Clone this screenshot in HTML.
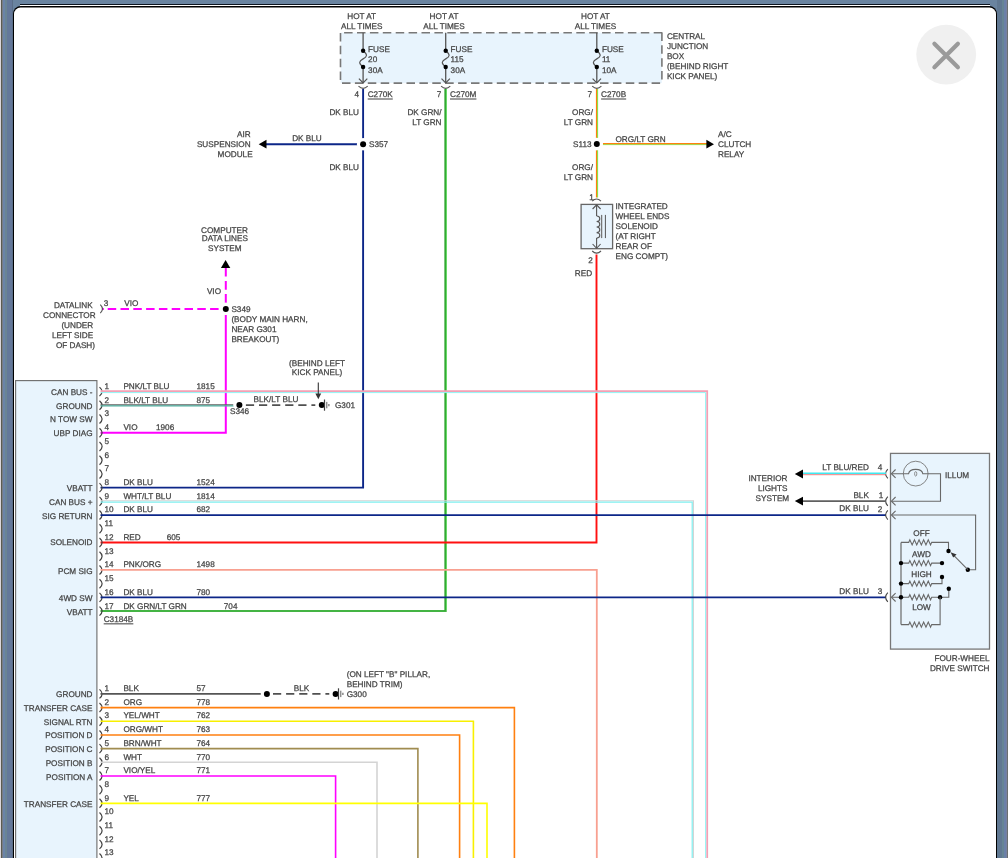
<!DOCTYPE html>
<html><head><meta charset="utf-8"><style>
html,body{margin:0;padding:0;width:1008px;height:858px;overflow:hidden;background:#fff;}
svg{will-change:transform;text-rendering:geometricPrecision;}
</style></head><body>
<svg width="1008" height="858" viewBox="0 0 1008 858" style="position:absolute;left:0;top:0">
<g font-family='"Liberation Sans", sans-serif' font-size="8.2" fill="#454545">
<rect x="0" y="0" width="1008" height="858" fill="#6a84a0"/>
<rect x="0" y="0" width="1" height="858" fill="#dad6dc"/>
<rect x="1" y="0" width="1" height="858" fill="#5c5c50"/>
<rect x="2" y="0" width="1" height="858" fill="#787c88"/>
<rect x="3" y="0" width="2" height="858" fill="#6a84a8"/>
<rect x="5" y="0" width="2" height="858" fill="#6a8494"/>
<rect x="7" y="0" width="5" height="858" fill="#64789a"/>
<rect x="12" y="0" width="1" height="858" fill="#5a6e88"/>
<rect x="1007" y="0" width="1" height="858" fill="#6a7070"/>
<rect x="1006" y="0" width="1" height="858" fill="#7880a0"/>
<rect x="1004" y="0" width="2" height="858" fill="#6a80a8"/>
<rect x="1002" y="0" width="2" height="858" fill="#668494"/>
<rect x="997" y="0" width="5" height="858" fill="#607892"/>
<rect x="20" y="4" width="970" height="1" fill="#0d1520"/>
<rect x="20" y="5" width="970" height="1" fill="#ffffff"/>
<rect x="13" y="6" width="984" height="900" rx="8" fill="#000"/>
<rect x="14" y="7.6" width="982" height="900" rx="6.5" fill="#fff"/>
<circle cx="946.2" cy="54.6" r="29.9" fill="#f0f0f0"/>
<path d="M934.4 43.8 L957.9 67.2 M957.9 43.8 L934.4 67.2" stroke="#9a9a9a" stroke-width="4.2" stroke-linecap="round"/>
<rect x="340.6" y="32.7" width="321.2" height="50.4" fill="#e8f4fd"/>
<line x1="340.50" y1="32.90" x2="340.50" y2="83.50" stroke="#787878" stroke-width="1.6" stroke-dasharray="8.5,4.4"/>
<line x1="661.90" y1="32.40" x2="661.90" y2="83.50" stroke="#787878" stroke-width="1.6" stroke-dasharray="8.5,4.4"/>
<line x1="344.10" y1="32.70" x2="662.70" y2="32.70" stroke="#787878" stroke-width="1.6" stroke-dasharray="8.5,4.4"/>
<line x1="342.00" y1="83.10" x2="662.70" y2="83.10" stroke="#787878" stroke-width="1.6" stroke-dasharray="8.5,4.4"/>
<text x="666.90" y="39.00" text-anchor="start" stroke="#454545" stroke-width="0.25" >CENTRAL</text>
<text x="666.90" y="49.00" text-anchor="start" stroke="#454545" stroke-width="0.25" >JUNCTION</text>
<text x="666.90" y="59.00" text-anchor="start" stroke="#454545" stroke-width="0.25" >BOX</text>
<text x="666.90" y="69.00" text-anchor="start" stroke="#454545" stroke-width="0.25" >(BEHIND RIGHT</text>
<text x="666.90" y="79.00" text-anchor="start" stroke="#454545" stroke-width="0.25" >KICK PANEL)</text>
<text x="361.70" y="19.00" text-anchor="middle" stroke="#454545" stroke-width="0.25" >HOT AT</text>
<text x="361.70" y="29.00" text-anchor="middle" stroke="#454545" stroke-width="0.25" >ALL TIMES</text>
<line x1="363.10" y1="32.70" x2="363.10" y2="83.00" stroke="#555" stroke-width="1.3" />
<rect x="361.90" y="50.70" width="2.4" height="16.30" fill="#e8f4fd"/>
<path d="M363.10 50.70 C368.10 54.70 367.10 56.70 363.10 58.85 S358.10 63.00 363.10 67.00" fill="none" stroke="#555" stroke-width="1.2"/>
<circle cx="363.10" cy="50.70" r="2.2" fill="#000"/>
<circle cx="363.10" cy="67.00" r="2.2" fill="#000"/>
<polyline points="358.90,78.60 363.10,83.00 367.30,78.60" fill="none" stroke="#555" stroke-width="1.2" stroke-linejoin="miter" />
<text x="368.10" y="52.00" text-anchor="start" stroke="#454545" stroke-width="0.25" >FUSE</text>
<text x="368.10" y="62.00" text-anchor="start" stroke="#454545" stroke-width="0.25" >20</text>
<text x="368.10" y="73.00" text-anchor="start" stroke="#454545" stroke-width="0.25" >30A</text>
<path d="M358.50 86.2 Q363.10 90.5 367.70 86.2" fill="none" stroke="#555" stroke-width="1.1"/>
<text x="356.80" y="97.00" text-anchor="middle" stroke="#454545" stroke-width="0.25" >4</text>
<text x="367.70" y="97.00" text-anchor="start" stroke="#454545" stroke-width="0.25" >C270K</text>
<line x1="367.70" y1="99.00" x2="392.77" y2="99.00" stroke="#6a6a6a" stroke-width="1.3"/>
<text x="444.00" y="19.00" text-anchor="middle" stroke="#454545" stroke-width="0.25" >HOT AT</text>
<text x="444.00" y="29.00" text-anchor="middle" stroke="#454545" stroke-width="0.25" >ALL TIMES</text>
<line x1="445.70" y1="32.70" x2="445.70" y2="83.00" stroke="#555" stroke-width="1.3" />
<rect x="444.50" y="50.70" width="2.4" height="16.30" fill="#e8f4fd"/>
<path d="M445.70 50.70 C450.70 54.70 449.70 56.70 445.70 58.85 S440.70 63.00 445.70 67.00" fill="none" stroke="#555" stroke-width="1.2"/>
<circle cx="445.70" cy="50.70" r="2.2" fill="#000"/>
<circle cx="445.70" cy="67.00" r="2.2" fill="#000"/>
<polyline points="441.50,78.60 445.70,83.00 449.90,78.60" fill="none" stroke="#555" stroke-width="1.2" stroke-linejoin="miter" />
<text x="450.60" y="52.00" text-anchor="start" stroke="#454545" stroke-width="0.25" >FUSE</text>
<text x="450.60" y="62.00" text-anchor="start" stroke="#454545" stroke-width="0.25" >115</text>
<text x="450.60" y="73.00" text-anchor="start" stroke="#454545" stroke-width="0.25" >30A</text>
<path d="M441.10 86.2 Q445.70 90.5 450.30 86.2" fill="none" stroke="#555" stroke-width="1.1"/>
<text x="439.00" y="97.00" text-anchor="middle" stroke="#454545" stroke-width="0.25" >7</text>
<text x="450.00" y="97.00" text-anchor="start" stroke="#454545" stroke-width="0.25" >C270M</text>
<line x1="450.00" y1="99.00" x2="476.43" y2="99.00" stroke="#6a6a6a" stroke-width="1.3"/>
<text x="595.40" y="19.00" text-anchor="middle" stroke="#454545" stroke-width="0.25" >HOT AT</text>
<text x="595.40" y="29.00" text-anchor="middle" stroke="#454545" stroke-width="0.25" >ALL TIMES</text>
<line x1="596.80" y1="32.70" x2="596.80" y2="83.00" stroke="#555" stroke-width="1.3" />
<rect x="595.60" y="50.70" width="2.4" height="16.30" fill="#e8f4fd"/>
<path d="M596.80 50.70 C601.80 54.70 600.80 56.70 596.80 58.85 S591.80 63.00 596.80 67.00" fill="none" stroke="#555" stroke-width="1.2"/>
<circle cx="596.80" cy="50.70" r="2.2" fill="#000"/>
<circle cx="596.80" cy="67.00" r="2.2" fill="#000"/>
<polyline points="592.60,78.60 596.80,83.00 601.00,78.60" fill="none" stroke="#555" stroke-width="1.2" stroke-linejoin="miter" />
<text x="601.90" y="52.00" text-anchor="start" stroke="#454545" stroke-width="0.25" >FUSE</text>
<text x="601.90" y="62.00" text-anchor="start" stroke="#454545" stroke-width="0.25" >11</text>
<text x="601.90" y="73.00" text-anchor="start" stroke="#454545" stroke-width="0.25" >10A</text>
<path d="M592.20 86.2 Q596.80 90.5 601.40 86.2" fill="none" stroke="#555" stroke-width="1.1"/>
<text x="589.80" y="97.00" text-anchor="middle" stroke="#454545" stroke-width="0.25" >7</text>
<text x="601.10" y="97.00" text-anchor="start" stroke="#454545" stroke-width="0.25" >C270B</text>
<line x1="601.10" y1="99.00" x2="626.17" y2="99.00" stroke="#6a6a6a" stroke-width="1.3"/>
<polyline points="363.10,89.00 363.10,139.60" fill="none" stroke="#0c2688" stroke-width="1.9" stroke-linejoin="miter" />
<polyline points="363.10,148.80 363.10,487.64 100.50,487.64" fill="none" stroke="#0c2688" stroke-width="1.9" stroke-linejoin="miter" />
<line x1="358.40" y1="144.20" x2="265.00" y2="144.20" stroke="#0c2688" stroke-width="1.9" />
<path d="M258.7 144.2 L266.5 139.8 L266.5 148.6 Z" fill="#000"/>
<circle cx="363.10" cy="144.20" r="6.2" fill="#fff"/>
<circle cx="363.10" cy="144.20" r="3.0" fill="#000"/>
<text x="369.00" y="147.00" text-anchor="start" stroke="#454545" stroke-width="0.25" >S357</text>
<text x="359.00" y="115.00" text-anchor="end" stroke="#454545" stroke-width="0.25" >DK BLU</text>
<text x="359.00" y="170.00" text-anchor="end" stroke="#454545" stroke-width="0.25" >DK BLU</text>
<text x="307.00" y="141.00" text-anchor="middle" stroke="#454545" stroke-width="0.25" >DK BLU</text>
<text x="250.60" y="137.00" text-anchor="end" stroke="#454545" stroke-width="0.25" >AIR</text>
<text x="250.60" y="147.00" text-anchor="end" stroke="#454545" stroke-width="0.25" >SUSPENSION</text>
<text x="252.60" y="157.00" text-anchor="end" stroke="#454545" stroke-width="0.25" >MODULE</text>
<polyline points="445.70,89.00 445.70,611.12 100.50,611.12" fill="none" stroke="#44b444" stroke-width="2.0" stroke-linejoin="miter" />
<polyline points="445.00,89.00 445.00,610.52" fill="none" stroke="#109010" stroke-width="0.8" stroke-linejoin="miter" />
<polyline points="446.40,89.00 446.40,610.52" fill="none" stroke="#60e060" stroke-width="0.8" stroke-linejoin="miter" />
<text x="441.50" y="115.00" text-anchor="end" stroke="#454545" stroke-width="0.25" >DK GRN/</text>
<text x="441.50" y="125.00" text-anchor="end" stroke="#454545" stroke-width="0.25" >LT GRN</text>
<line x1="596.50" y1="89.00" x2="596.50" y2="138.00" stroke="#ff8010" stroke-width="1.2" />
<line x1="597.60" y1="89.00" x2="597.60" y2="138.00" stroke="#7ce040" stroke-width="1.0" />
<line x1="596.50" y1="150.20" x2="596.50" y2="197.50" stroke="#ff8010" stroke-width="1.2" />
<line x1="597.60" y1="150.20" x2="597.60" y2="197.50" stroke="#7ce040" stroke-width="1.0" />
<line x1="602.40" y1="143.50" x2="707.00" y2="143.50" stroke="#ff8010" stroke-width="1.2" />
<line x1="602.40" y1="144.60" x2="707.00" y2="144.60" stroke="#a0d040" stroke-width="1.0" />
<path d="M714 144.2 L706.4 139.8 L706.4 148.6 Z" fill="#000"/>
<circle cx="596.80" cy="144.00" r="6.2" fill="#fff"/>
<circle cx="596.80" cy="144.00" r="3.0" fill="#000"/>
<text x="591.60" y="147.00" text-anchor="end" stroke="#454545" stroke-width="0.25" >S113</text>
<text x="593.00" y="115.00" text-anchor="end" stroke="#454545" stroke-width="0.25" >ORG/</text>
<text x="593.00" y="125.00" text-anchor="end" stroke="#454545" stroke-width="0.25" >LT GRN</text>
<text x="593.00" y="170.00" text-anchor="end" stroke="#454545" stroke-width="0.25" >ORG/</text>
<text x="593.00" y="180.00" text-anchor="end" stroke="#454545" stroke-width="0.25" >LT GRN</text>
<text x="640.60" y="142.00" text-anchor="middle" stroke="#454545" stroke-width="0.25" >ORG/LT GRN</text>
<text x="718.00" y="137.00" text-anchor="start" stroke="#454545" stroke-width="0.25" >A/C</text>
<text x="718.00" y="147.00" text-anchor="start" stroke="#454545" stroke-width="0.25" >CLUTCH</text>
<text x="718.00" y="157.00" text-anchor="start" stroke="#454545" stroke-width="0.25" >RELAY</text>
<rect x="581.1" y="204.4" width="31.5" height="44.3" fill="#e8f4fd" stroke="#666" stroke-width="1.3"/>
<line x1="596.60" y1="205.00" x2="596.60" y2="216.00" stroke="#555" stroke-width="1.1" />
<line x1="596.60" y1="238.10" x2="596.60" y2="248.00" stroke="#555" stroke-width="1.1" />
<polyline points="592.60,209.00 596.60,204.80 600.60,209.00" fill="none" stroke="#555" stroke-width="1.1" stroke-linejoin="miter" />
<polyline points="592.60,244.00 596.60,248.30 600.60,244.00" fill="none" stroke="#555" stroke-width="1.1" stroke-linejoin="miter" />
<path d="M596.6 216.00 C600.80 216.00 600.80 221.53 596.60 221.53 C600.80 221.53 600.80 227.05 596.60 227.05 C600.80 227.05 600.80 232.58 596.60 232.58 C600.80 232.57 600.80 238.10 596.60 238.10" fill="none" stroke="#555" stroke-width="1.1"/>
<line x1="601.60" y1="214.90" x2="601.60" y2="238.10" stroke="#777" stroke-width="1.3" />
<line x1="605.40" y1="214.90" x2="605.40" y2="238.10" stroke="#555" stroke-width="1.0" />
<path d="M592.20 201.2 Q596.60 196.8 601.00 201.2" fill="none" stroke="#555" stroke-width="1.1"/>
<path d="M592.20 251.0 Q596.60 255.4 601.00 251.0" fill="none" stroke="#555" stroke-width="1.1"/>
<text x="591.60" y="200.00" text-anchor="middle" stroke="#454545" stroke-width="0.25" >1</text>
<text x="590.50" y="263.00" text-anchor="middle" stroke="#454545" stroke-width="0.25" >2</text>
<text x="592.10" y="276.00" text-anchor="end" stroke="#454545" stroke-width="0.25" >RED</text>
<text x="615.60" y="209.00" text-anchor="start" stroke="#454545" stroke-width="0.25" >INTEGRATED</text>
<text x="615.60" y="219.00" text-anchor="start" stroke="#454545" stroke-width="0.25" >WHEEL ENDS</text>
<text x="615.60" y="229.00" text-anchor="start" stroke="#454545" stroke-width="0.25" >SOLENOID</text>
<text x="615.60" y="239.00" text-anchor="start" stroke="#454545" stroke-width="0.25" >(AT RIGHT</text>
<text x="615.60" y="249.00" text-anchor="start" stroke="#454545" stroke-width="0.25" >REAR OF</text>
<text x="615.60" y="259.00" text-anchor="start" stroke="#454545" stroke-width="0.25" >ENG COMPT)</text>
<polyline points="596.50,254.50 596.50,542.52 100.50,542.52" fill="none" stroke="#ff1010" stroke-width="1.9" stroke-linejoin="miter" />
<text x="224.50" y="233.00" text-anchor="middle" stroke="#454545" stroke-width="0.25" >COMPUTER</text>
<text x="224.80" y="241.00" text-anchor="middle" stroke="#454545" stroke-width="0.25" >DATA LINES</text>
<text x="224.80" y="251.00" text-anchor="middle" stroke="#454545" stroke-width="0.25" >SYSTEM</text>
<path d="M225.6 259.9 L220.9 267.9 L230.3 267.9 Z" fill="#000"/>
<line x1="225.80" y1="267.90" x2="225.80" y2="303.00" stroke="#ff00ff" stroke-width="2.0" stroke-dasharray="8.7,4.4"/>
<line x1="102.10" y1="308.90" x2="103.90" y2="308.90" stroke="#ff00ff" stroke-width="2.0" />
<line x1="107.70" y1="308.90" x2="219.00" y2="308.90" stroke="#ff00ff" stroke-width="2.0" stroke-dasharray="8.5,4.3"/>
<circle cx="225.80" cy="308.90" r="6.2" fill="#fff"/>
<circle cx="225.80" cy="308.90" r="3.0" fill="#000"/>
<polyline points="225.80,315.00 225.80,432.76 100.50,432.76" fill="none" stroke="#ff00ff" stroke-width="2.0" stroke-linejoin="miter" />
<text x="221.00" y="294.00" text-anchor="end" stroke="#454545" stroke-width="0.25" >VIO</text>
<text x="106.00" y="306.00" text-anchor="middle" stroke="#454545" stroke-width="0.25" >3</text>
<text x="124.30" y="306.00" text-anchor="start" stroke="#454545" stroke-width="0.25" >VIO</text>
<path d="M100.3 304.6 Q104.6 308.9 100.3 313.2" fill="none" stroke="#555" stroke-width="1.1"/>
<text x="53.90" y="308.00" text-anchor="start" stroke="#454545" stroke-width="0.25" >DATALINK</text>
<text x="43.00" y="318.00" text-anchor="start" stroke="#454545" stroke-width="0.25" >CONNECTOR</text>
<text x="61.40" y="328.00" text-anchor="start" stroke="#454545" stroke-width="0.25" >(UNDER</text>
<text x="51.90" y="338.00" text-anchor="start" stroke="#454545" stroke-width="0.25" >LEFT SIDE</text>
<text x="55.90" y="348.00" text-anchor="start" stroke="#454545" stroke-width="0.25" >OF DASH)</text>
<text x="231.40" y="312.00" text-anchor="start" stroke="#454545" stroke-width="0.25" >S349</text>
<text x="231.40" y="322.00" text-anchor="start" stroke="#454545" stroke-width="0.25" >(BODY MAIN HARN,</text>
<text x="231.40" y="332.00" text-anchor="start" stroke="#454545" stroke-width="0.25" >NEAR G301</text>
<text x="231.40" y="342.00" text-anchor="start" stroke="#454545" stroke-width="0.25" >BREAKOUT)</text>
<text x="317.00" y="366.00" text-anchor="middle" stroke="#454545" stroke-width="0.25" >(BEHIND LEFT</text>
<text x="317.00" y="375.00" text-anchor="middle" stroke="#454545" stroke-width="0.25" >KICK PANEL)</text>
<rect x="15.6" y="380.6" width="81.3" height="500" fill="#e8f4fd" stroke="#707070" stroke-width="1.15"/>
<path d="M99.50 387.10 Q104.70 391.60 99.50 396.10" fill="none" stroke="#444" stroke-width="1.25"/>
<text x="104.50" y="389.00" text-anchor="start" stroke="#454545" stroke-width="0.25" >1</text>
<text x="92.50" y="395.00" text-anchor="end" stroke="#454545" stroke-width="0.25" >CAN BUS -</text>
<text x="123.40" y="389.00" text-anchor="start" stroke="#454545" stroke-width="0.25" >PNK/LT BLU</text>
<text x="196.50" y="389.00" text-anchor="start" stroke="#454545" stroke-width="0.25" >1815</text>
<path d="M99.50 400.82 Q104.70 405.32 99.50 409.82" fill="none" stroke="#444" stroke-width="1.25"/>
<text x="104.50" y="403.00" text-anchor="start" stroke="#454545" stroke-width="0.25" >2</text>
<text x="92.50" y="409.00" text-anchor="end" stroke="#454545" stroke-width="0.25" >GROUND</text>
<text x="123.40" y="403.00" text-anchor="start" stroke="#454545" stroke-width="0.25" >BLK/LT BLU</text>
<text x="196.50" y="403.00" text-anchor="start" stroke="#454545" stroke-width="0.25" >875</text>
<path d="M99.50 414.54 Q104.70 419.04 99.50 423.54" fill="none" stroke="#444" stroke-width="1.25"/>
<text x="104.50" y="416.00" text-anchor="start" stroke="#454545" stroke-width="0.25" >3</text>
<text x="92.50" y="422.00" text-anchor="end" stroke="#454545" stroke-width="0.25" >N TOW SW</text>
<path d="M99.50 428.26 Q104.70 432.76 99.50 437.26" fill="none" stroke="#444" stroke-width="1.25"/>
<text x="104.50" y="430.00" text-anchor="start" stroke="#454545" stroke-width="0.25" >4</text>
<text x="92.50" y="436.00" text-anchor="end" stroke="#454545" stroke-width="0.25" >UBP DIAG</text>
<text x="123.40" y="430.00" text-anchor="start" stroke="#454545" stroke-width="0.25" >VIO</text>
<text x="156.00" y="430.00" text-anchor="start" stroke="#454545" stroke-width="0.25" >1906</text>
<path d="M99.50 441.98 Q104.70 446.48 99.50 450.98" fill="none" stroke="#444" stroke-width="1.25"/>
<text x="104.50" y="444.00" text-anchor="start" stroke="#454545" stroke-width="0.25" >5</text>
<path d="M99.50 455.70 Q104.70 460.20 99.50 464.70" fill="none" stroke="#444" stroke-width="1.25"/>
<text x="104.50" y="458.00" text-anchor="start" stroke="#454545" stroke-width="0.25" >6</text>
<path d="M99.50 469.42 Q104.70 473.92 99.50 478.42" fill="none" stroke="#444" stroke-width="1.25"/>
<text x="104.50" y="471.00" text-anchor="start" stroke="#454545" stroke-width="0.25" >7</text>
<path d="M99.50 483.14 Q104.70 487.64 99.50 492.14" fill="none" stroke="#444" stroke-width="1.25"/>
<text x="104.50" y="485.00" text-anchor="start" stroke="#454545" stroke-width="0.25" >8</text>
<text x="92.50" y="491.00" text-anchor="end" stroke="#454545" stroke-width="0.25" >VBATT</text>
<text x="123.40" y="485.00" text-anchor="start" stroke="#454545" stroke-width="0.25" >DK BLU</text>
<text x="196.50" y="485.00" text-anchor="start" stroke="#454545" stroke-width="0.25" >1524</text>
<path d="M99.50 496.86 Q104.70 501.36 99.50 505.86" fill="none" stroke="#444" stroke-width="1.25"/>
<text x="104.50" y="499.00" text-anchor="start" stroke="#454545" stroke-width="0.25" >9</text>
<text x="92.50" y="505.00" text-anchor="end" stroke="#454545" stroke-width="0.25" >CAN BUS +</text>
<text x="123.40" y="499.00" text-anchor="start" stroke="#454545" stroke-width="0.25" >WHT/LT BLU</text>
<text x="196.50" y="499.00" text-anchor="start" stroke="#454545" stroke-width="0.25" >1814</text>
<path d="M99.50 510.58 Q104.70 515.08 99.50 519.58" fill="none" stroke="#444" stroke-width="1.25"/>
<text x="104.50" y="512.00" text-anchor="start" stroke="#454545" stroke-width="0.25" >10</text>
<text x="92.50" y="519.00" text-anchor="end" stroke="#454545" stroke-width="0.25" >SIG RETURN</text>
<text x="123.40" y="512.00" text-anchor="start" stroke="#454545" stroke-width="0.25" >DK BLU</text>
<text x="196.50" y="512.00" text-anchor="start" stroke="#454545" stroke-width="0.25" >682</text>
<path d="M99.50 524.30 Q104.70 528.80 99.50 533.30" fill="none" stroke="#444" stroke-width="1.25"/>
<text x="104.50" y="526.00" text-anchor="start" stroke="#454545" stroke-width="0.25" >11</text>
<path d="M99.50 538.02 Q104.70 542.52 99.50 547.02" fill="none" stroke="#444" stroke-width="1.25"/>
<text x="104.50" y="540.00" text-anchor="start" stroke="#454545" stroke-width="0.25" >12</text>
<text x="92.50" y="545.00" text-anchor="end" stroke="#454545" stroke-width="0.25" >SOLENOID</text>
<text x="123.40" y="540.00" text-anchor="start" stroke="#454545" stroke-width="0.25" >RED</text>
<text x="166.70" y="540.00" text-anchor="start" stroke="#454545" stroke-width="0.25" >605</text>
<path d="M99.50 551.74 Q104.70 556.24 99.50 560.74" fill="none" stroke="#444" stroke-width="1.25"/>
<text x="104.50" y="554.00" text-anchor="start" stroke="#454545" stroke-width="0.25" >13</text>
<path d="M99.50 565.46 Q104.70 569.96 99.50 574.46" fill="none" stroke="#444" stroke-width="1.25"/>
<text x="104.50" y="567.00" text-anchor="start" stroke="#454545" stroke-width="0.25" >14</text>
<text x="92.50" y="574.00" text-anchor="end" stroke="#454545" stroke-width="0.25" >PCM SIG</text>
<text x="123.40" y="567.00" text-anchor="start" stroke="#454545" stroke-width="0.25" >PNK/ORG</text>
<text x="196.50" y="567.00" text-anchor="start" stroke="#454545" stroke-width="0.25" >1498</text>
<path d="M99.50 579.18 Q104.70 583.68 99.50 588.18" fill="none" stroke="#444" stroke-width="1.25"/>
<text x="104.50" y="581.00" text-anchor="start" stroke="#454545" stroke-width="0.25" >15</text>
<path d="M99.50 592.90 Q104.70 597.40 99.50 601.90" fill="none" stroke="#444" stroke-width="1.25"/>
<text x="104.50" y="595.00" text-anchor="start" stroke="#454545" stroke-width="0.25" >16</text>
<text x="92.50" y="601.00" text-anchor="end" stroke="#454545" stroke-width="0.25" >4WD SW</text>
<text x="123.40" y="595.00" text-anchor="start" stroke="#454545" stroke-width="0.25" >DK BLU</text>
<text x="196.50" y="595.00" text-anchor="start" stroke="#454545" stroke-width="0.25" >780</text>
<path d="M99.50 606.62 Q104.70 611.12 99.50 615.62" fill="none" stroke="#444" stroke-width="1.25"/>
<text x="104.50" y="609.00" text-anchor="start" stroke="#454545" stroke-width="0.25" >17</text>
<text x="92.50" y="615.00" text-anchor="end" stroke="#454545" stroke-width="0.25" >VBATT</text>
<text x="123.40" y="609.00" text-anchor="start" stroke="#454545" stroke-width="0.25" >DK GRN/LT GRN</text>
<text x="223.80" y="609.00" text-anchor="start" stroke="#454545" stroke-width="0.25" >704</text>
<text x="103.70" y="622.00" text-anchor="start" stroke="#454545" stroke-width="0.25" >C3184B</text>
<line x1="103.70" y1="623.80" x2="133.33" y2="623.80" stroke="#6a6a6a" stroke-width="1.3"/>
<polyline points="100.50,391.10 707.20,391.10 707.20,858.00" fill="none" stroke="#f4a0b4" stroke-width="1.8" stroke-linejoin="miter" />
<polyline points="100.50,392.60 705.60,392.60 705.60,858.00" fill="none" stroke="#90f4f4" stroke-width="1.0" stroke-linejoin="miter" />
<line x1="100.50" y1="404.92" x2="236.00" y2="404.92" stroke="#606060" stroke-width="1.1" />
<line x1="100.50" y1="405.92" x2="236.00" y2="405.92" stroke="#50b0a0" stroke-width="1.1" />
<circle cx="239.40" cy="405.10" r="6.2" fill="#fff"/>
<circle cx="239.40" cy="405.10" r="3.0" fill="#000"/>
<line x1="245.90" y1="405.10" x2="315.30" y2="405.10" stroke="#505050" stroke-width="1.7" stroke-dasharray="8.2,4.9"/>
<circle cx="321.80" cy="405.10" r="3.0" fill="#000"/>
<line x1="324.50" y1="399.50" x2="324.50" y2="410.70" stroke="#404040" stroke-width="1.2" />
<line x1="326.80" y1="401.90" x2="326.80" y2="408.30" stroke="#606060" stroke-width="1.0" />
<line x1="328.90" y1="403.90" x2="328.90" y2="406.30" stroke="#606060" stroke-width="1.1" />
<line x1="318.30" y1="382.50" x2="318.30" y2="397.00" stroke="#333" stroke-width="1.1" />
<path d="M318.3 399.2 L315.4 393.6 L321.2 393.6 Z" fill="#333"/>
<text x="276.00" y="402.00" text-anchor="middle" stroke="#454545" stroke-width="0.25" >BLK/LT BLU</text>
<text x="239.50" y="414.00" text-anchor="middle" stroke="#454545" stroke-width="0.25" >S346</text>
<text x="335.00" y="408.00" text-anchor="start" stroke="#454545" stroke-width="0.25" >G301</text>
<polyline points="100.50,500.76 693.40,500.76 693.40,858.00" fill="none" stroke="#d4d4d4" stroke-width="1.2" stroke-linejoin="miter" />
<polyline points="100.50,502.06 692.20,502.06 692.20,858.00" fill="none" stroke="#80f0f0" stroke-width="1.2" stroke-linejoin="miter" />
<line x1="100.50" y1="515.08" x2="886.00" y2="515.08" stroke="#0c2688" stroke-width="1.9" />
<polyline points="100.50,569.96 596.80,569.96 596.80,858.00" fill="none" stroke="#f8a090" stroke-width="1.8" stroke-linejoin="miter" />
<line x1="100.50" y1="597.40" x2="886.00" y2="597.40" stroke="#0c2688" stroke-width="1.9" />
<path d="M99.50 689.40 Q104.70 693.90 99.50 698.40" fill="none" stroke="#444" stroke-width="1.25"/>
<text x="104.50" y="691.00" text-anchor="start" stroke="#454545" stroke-width="0.25" >1</text>
<text x="92.50" y="697.00" text-anchor="end" stroke="#454545" stroke-width="0.25" >GROUND</text>
<text x="123.40" y="691.00" text-anchor="start" stroke="#454545" stroke-width="0.25" >BLK</text>
<text x="196.50" y="691.00" text-anchor="start" stroke="#454545" stroke-width="0.25" >57</text>
<path d="M99.50 703.08 Q104.70 707.58 99.50 712.08" fill="none" stroke="#444" stroke-width="1.25"/>
<text x="104.50" y="705.00" text-anchor="start" stroke="#454545" stroke-width="0.25" >2</text>
<text x="92.50" y="711.00" text-anchor="end" stroke="#454545" stroke-width="0.25" >TRANSFER CASE</text>
<text x="123.40" y="705.00" text-anchor="start" stroke="#454545" stroke-width="0.25" >ORG</text>
<text x="196.50" y="705.00" text-anchor="start" stroke="#454545" stroke-width="0.25" >778</text>
<path d="M99.50 716.76 Q104.70 721.26 99.50 725.76" fill="none" stroke="#444" stroke-width="1.25"/>
<text x="104.50" y="718.00" text-anchor="start" stroke="#454545" stroke-width="0.25" >3</text>
<text x="92.50" y="725.00" text-anchor="end" stroke="#454545" stroke-width="0.25" >SIGNAL RTN</text>
<text x="123.40" y="718.00" text-anchor="start" stroke="#454545" stroke-width="0.25" >YEL/WHT</text>
<text x="196.50" y="718.00" text-anchor="start" stroke="#454545" stroke-width="0.25" >762</text>
<path d="M99.50 730.44 Q104.70 734.94 99.50 739.44" fill="none" stroke="#444" stroke-width="1.25"/>
<text x="104.50" y="732.00" text-anchor="start" stroke="#454545" stroke-width="0.25" >4</text>
<text x="92.50" y="738.00" text-anchor="end" stroke="#454545" stroke-width="0.25" >POSITION D</text>
<text x="123.40" y="732.00" text-anchor="start" stroke="#454545" stroke-width="0.25" >ORG/WHT</text>
<text x="196.50" y="732.00" text-anchor="start" stroke="#454545" stroke-width="0.25" >763</text>
<path d="M99.50 744.12 Q104.70 748.62 99.50 753.12" fill="none" stroke="#444" stroke-width="1.25"/>
<text x="104.50" y="746.00" text-anchor="start" stroke="#454545" stroke-width="0.25" >5</text>
<text x="92.50" y="752.00" text-anchor="end" stroke="#454545" stroke-width="0.25" >POSITION C</text>
<text x="123.40" y="746.00" text-anchor="start" stroke="#454545" stroke-width="0.25" >BRN/WHT</text>
<text x="196.50" y="746.00" text-anchor="start" stroke="#454545" stroke-width="0.25" >764</text>
<path d="M99.50 757.80 Q104.70 762.30 99.50 766.80" fill="none" stroke="#444" stroke-width="1.25"/>
<text x="104.50" y="760.00" text-anchor="start" stroke="#454545" stroke-width="0.25" >6</text>
<text x="92.50" y="766.00" text-anchor="end" stroke="#454545" stroke-width="0.25" >POSITION B</text>
<text x="123.40" y="760.00" text-anchor="start" stroke="#454545" stroke-width="0.25" >WHT</text>
<text x="196.50" y="760.00" text-anchor="start" stroke="#454545" stroke-width="0.25" >770</text>
<path d="M99.50 771.48 Q104.70 775.98 99.50 780.48" fill="none" stroke="#444" stroke-width="1.25"/>
<text x="104.50" y="773.00" text-anchor="start" stroke="#454545" stroke-width="0.25" >7</text>
<text x="92.50" y="780.00" text-anchor="end" stroke="#454545" stroke-width="0.25" >POSITION A</text>
<text x="123.40" y="773.00" text-anchor="start" stroke="#454545" stroke-width="0.25" >VIO/YEL</text>
<text x="196.50" y="773.00" text-anchor="start" stroke="#454545" stroke-width="0.25" >771</text>
<path d="M99.50 785.16 Q104.70 789.66 99.50 794.16" fill="none" stroke="#444" stroke-width="1.25"/>
<text x="104.50" y="787.00" text-anchor="start" stroke="#454545" stroke-width="0.25" >8</text>
<path d="M99.50 798.84 Q104.70 803.34 99.50 807.84" fill="none" stroke="#444" stroke-width="1.25"/>
<text x="104.50" y="801.00" text-anchor="start" stroke="#454545" stroke-width="0.25" >9</text>
<text x="92.50" y="807.00" text-anchor="end" stroke="#454545" stroke-width="0.25" >TRANSFER CASE</text>
<text x="123.40" y="801.00" text-anchor="start" stroke="#454545" stroke-width="0.25" >YEL</text>
<text x="196.50" y="801.00" text-anchor="start" stroke="#454545" stroke-width="0.25" >777</text>
<path d="M99.50 812.52 Q104.70 817.02 99.50 821.52" fill="none" stroke="#444" stroke-width="1.25"/>
<text x="104.50" y="814.00" text-anchor="start" stroke="#454545" stroke-width="0.25" >10</text>
<path d="M99.50 826.20 Q104.70 830.70 99.50 835.20" fill="none" stroke="#444" stroke-width="1.25"/>
<text x="104.50" y="828.00" text-anchor="start" stroke="#454545" stroke-width="0.25" >11</text>
<path d="M99.50 839.88 Q104.70 844.38 99.50 848.88" fill="none" stroke="#444" stroke-width="1.25"/>
<text x="104.50" y="842.00" text-anchor="start" stroke="#454545" stroke-width="0.25" >12</text>
<path d="M99.50 853.56 Q104.70 858.06 99.50 862.56" fill="none" stroke="#444" stroke-width="1.25"/>
<text x="104.50" y="855.00" text-anchor="start" stroke="#454545" stroke-width="0.25" >13</text>
<line x1="100.50" y1="693.90" x2="266.00" y2="693.90" stroke="#555" stroke-width="1.6" />
<circle cx="266.90" cy="693.90" r="6.2" fill="#fff"/>
<circle cx="266.90" cy="693.90" r="3.0" fill="#000"/>
<line x1="273.00" y1="693.90" x2="329.30" y2="693.90" stroke="#505050" stroke-width="1.7" stroke-dasharray="8.2,4.9"/>
<circle cx="335.60" cy="693.90" r="3.0" fill="#000"/>
<line x1="338.50" y1="688.30" x2="338.50" y2="699.50" stroke="#404040" stroke-width="1.2" />
<line x1="340.80" y1="690.70" x2="340.80" y2="697.10" stroke="#606060" stroke-width="1.0" />
<line x1="342.90" y1="692.70" x2="342.90" y2="695.10" stroke="#606060" stroke-width="1.1" />
<text x="301.60" y="691.00" text-anchor="middle" stroke="#454545" stroke-width="0.25" >BLK</text>
<text x="346.70" y="677.00" text-anchor="start" stroke="#454545" stroke-width="0.25" >(ON LEFT &quot;B&quot; PILLAR,</text>
<text x="346.70" y="687.00" text-anchor="start" stroke="#454545" stroke-width="0.25" >BEHIND TRIM)</text>
<text x="346.70" y="697.00" text-anchor="start" stroke="#454545" stroke-width="0.25" >G300</text>
<polyline points="100.50,707.58 514.40,707.58 514.40,858.00" fill="none" stroke="#ff8010" stroke-width="1.6" stroke-linejoin="miter" />
<polyline points="100.50,721.26 473.40,721.26 473.40,858.00" fill="none" stroke="#f8f000" stroke-width="1.6" stroke-linejoin="miter" />
<polyline points="100.50,734.94 459.60,734.94 459.60,858.00" fill="none" stroke="#ff8010" stroke-width="1.6" stroke-linejoin="miter" />
<polyline points="100.50,748.62 417.90,748.62 417.90,858.00" fill="none" stroke="#a08c50" stroke-width="1.6" stroke-linejoin="miter" />
<polyline points="100.50,762.30 377.00,762.30 377.00,858.00" fill="none" stroke="#d4d4d4" stroke-width="1.6" stroke-linejoin="miter" />
<polyline points="100.50,775.98 335.60,775.98 335.60,858.00" fill="none" stroke="#ff00ff" stroke-width="1.6" stroke-linejoin="miter" />
<polyline points="100.50,803.34 487.00,803.34 487.00,858.00" fill="none" stroke="#ffff00" stroke-width="1.6" stroke-linejoin="miter" />
<rect x="890.5" y="453.4" width="99.0" height="195.7" fill="#e8f4fd" stroke="#777" stroke-width="1.3"/>
<path d="M887.8 469.10 Q883.4 473.70 887.8 478.30" fill="none" stroke="#444" stroke-width="1.1"/>
<polyline points="895.60,469.50 891.40,473.70 895.60,477.90" fill="none" stroke="#686868" stroke-width="1.1" stroke-linejoin="miter" />
<path d="M887.8 496.60 Q883.4 501.20 887.8 505.80" fill="none" stroke="#444" stroke-width="1.1"/>
<polyline points="895.60,497.00 891.40,501.20 895.60,505.40" fill="none" stroke="#686868" stroke-width="1.1" stroke-linejoin="miter" />
<path d="M887.8 510.40 Q883.4 515.00 887.8 519.60" fill="none" stroke="#444" stroke-width="1.1"/>
<polyline points="895.60,510.80 891.40,515.00 895.60,519.20" fill="none" stroke="#686868" stroke-width="1.1" stroke-linejoin="miter" />
<path d="M887.8 592.70 Q883.4 597.30 887.8 601.90" fill="none" stroke="#444" stroke-width="1.1"/>
<polyline points="895.60,593.10 891.40,597.30 895.60,601.50" fill="none" stroke="#686868" stroke-width="1.1" stroke-linejoin="miter" />
<line x1="802.50" y1="473.30" x2="886.00" y2="473.30" stroke="#40e8f0" stroke-width="1.4" />
<line x1="802.50" y1="474.70" x2="886.00" y2="474.70" stroke="#f07070" stroke-width="0.9" />
<path d="M794.8 474.0 L803.0 469.6 L803.0 478.4 Z" fill="#000"/>
<line x1="802.50" y1="501.10" x2="886.00" y2="501.10" stroke="#606060" stroke-width="1.9" />
<path d="M794.8 501.1 L803.0 496.7 L803.0 505.5 Z" fill="#000"/>
<text x="868.90" y="470.00" text-anchor="end" stroke="#454545" stroke-width="0.25" >LT BLU/RED</text>
<text x="880.00" y="470.00" text-anchor="middle" stroke="#454545" stroke-width="0.25" >4</text>
<text x="868.90" y="498.00" text-anchor="end" stroke="#454545" stroke-width="0.25" >BLK</text>
<text x="881.00" y="498.00" text-anchor="middle" stroke="#454545" stroke-width="0.25" >1</text>
<text x="868.90" y="511.00" text-anchor="end" stroke="#454545" stroke-width="0.25" >DK BLU</text>
<text x="880.00" y="512.00" text-anchor="middle" stroke="#454545" stroke-width="0.25" >2</text>
<text x="868.90" y="594.00" text-anchor="end" stroke="#454545" stroke-width="0.25" >DK BLU</text>
<text x="880.00" y="594.00" text-anchor="middle" stroke="#454545" stroke-width="0.25" >3</text>
<text x="787.50" y="481.00" text-anchor="end" stroke="#454545" stroke-width="0.25" >INTERIOR</text>
<text x="787.50" y="491.00" text-anchor="end" stroke="#454545" stroke-width="0.25" >LIGHTS</text>
<text x="789.20" y="501.00" text-anchor="end" stroke="#454545" stroke-width="0.25" >SYSTEM</text>
<text x="989.50" y="661.00" text-anchor="end" stroke="#454545" stroke-width="0.25" >FOUR-WHEEL</text>
<text x="989.50" y="671.00" text-anchor="end" stroke="#454545" stroke-width="0.25" >DRIVE SWITCH</text>
<circle cx="915.7" cy="473.6" r="12.4" fill="none" stroke="#777" stroke-width="0.9"/>
<path d="M892 473.7 L908.6 473.7 Q909.2 469.4 915.7 469.4 Q922.2 469.4 922.8 473.7 L940.5 473.7 L940.5 501.3 L892 501.3" fill="none" stroke="#686868" stroke-width="1.1"/>
<ellipse cx="915.7" cy="473.8" rx="1.1" ry="2.3" fill="none" stroke="#777" stroke-width="0.8"/>
<text x="945.00" y="478.00" text-anchor="start" stroke="#454545" stroke-width="0.25" >ILLUM</text>
<polyline points="892.00,515.00 975.60,515.00 975.60,569.70 967.80,569.70" fill="none" stroke="#686868" stroke-width="1.1" stroke-linejoin="miter" />
<circle cx="967.80" cy="569.70" r="2.2" fill="#000"/>
<line x1="967.80" y1="569.70" x2="952.50" y2="554.20" stroke="#686868" stroke-width="1.1" />
<path d="M950.6 552.2 L956.6 554.4 L953.2 557.6 Z" fill="#333"/>
<polyline points="901.00,542.40 908.70,542.40 909.85,539.80 912.15,545.00 914.45,539.80 916.75,545.00 919.05,539.80 921.35,545.00 923.65,539.80 925.95,545.00 928.25,539.80 930.55,545.00 931.70,542.40 948.50,542.40 948.50,551.00" fill="none" stroke="#686868" stroke-width="1.1" stroke-linejoin="miter" />
<circle cx="948.50" cy="551.00" r="2.2" fill="#000"/>
<line x1="901.00" y1="542.40" x2="901.00" y2="624.60" stroke="#686868" stroke-width="1.2" />
<polyline points="901.00,563.10 908.70,563.10 909.85,560.50 912.15,565.70 914.45,560.50 916.75,565.70 919.05,560.50 921.35,565.70 923.65,560.50 925.95,565.70 928.25,560.50 930.55,565.70 931.70,563.10 942.00,563.10" fill="none" stroke="#686868" stroke-width="1.1" stroke-linejoin="miter" />
<circle cx="901.00" cy="563.10" r="2.2" fill="#000"/>
<circle cx="942.00" cy="563.10" r="2.2" fill="#000"/>
<polyline points="901.00,583.60 908.70,583.60 909.85,581.00 912.15,586.20 914.45,581.00 916.75,586.20 919.05,581.00 921.35,586.20 923.65,581.00 925.95,586.20 928.25,581.00 930.55,586.20 931.70,583.60 942.00,583.60 942.00,577.00" fill="none" stroke="#686868" stroke-width="1.1" stroke-linejoin="miter" />
<circle cx="901.00" cy="583.60" r="2.2" fill="#000"/>
<circle cx="942.00" cy="577.00" r="2.2" fill="#000"/>
<polyline points="892.00,597.30 901.00,597.30 908.70,597.30 909.85,594.70 912.15,599.90 914.45,594.70 916.75,599.90 919.05,594.70 921.35,599.90 923.65,594.70 925.95,599.90 928.25,594.70 930.55,599.90 931.70,597.30 948.80,597.30 948.80,588.80" fill="none" stroke="#686868" stroke-width="1.1" stroke-linejoin="miter" />
<circle cx="901.00" cy="597.30" r="2.2" fill="#000"/>
<circle cx="940.10" cy="597.30" r="2.2" fill="#000"/>
<circle cx="948.80" cy="588.80" r="2.2" fill="#000"/>
<polyline points="901.00,624.60 908.70,624.60 909.85,622.00 912.15,627.20 914.45,622.00 916.75,627.20 919.05,622.00 921.35,627.20 923.65,622.00 925.95,627.20 928.25,622.00 930.55,627.20 931.70,624.60 940.10,624.60 940.10,597.30" fill="none" stroke="#686868" stroke-width="1.1" stroke-linejoin="miter" />
<text x="921.50" y="536.00" text-anchor="middle" stroke="#454545" stroke-width="0.25" >OFF</text>
<text x="921.50" y="557.00" text-anchor="middle" stroke="#454545" stroke-width="0.25" >AWD</text>
<text x="921.50" y="577.00" text-anchor="middle" stroke="#454545" stroke-width="0.25" >HIGH</text>
<text x="921.50" y="610.00" text-anchor="middle" stroke="#454545" stroke-width="0.25" >LOW</text>
</g></svg>
</body></html>
